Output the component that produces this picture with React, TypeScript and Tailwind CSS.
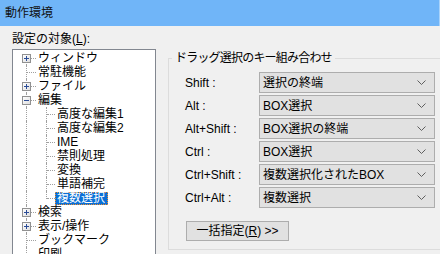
import React from "react";

type Item = { label: string; level: 0 | 1; box?: "+" | "-"; selected?: boolean; last?: boolean };

const items: Item[] = [
  { label: "ウィンドウ", level: 0, box: "+" },
  { label: "常駐機能", level: 0 },
  { label: "ファイル", level: 0, box: "+" },
  { label: "編集", level: 0, box: "-" },
  { label: "高度な編集1", level: 1 },
  { label: "高度な編集2", level: 1 },
  { label: "IME", level: 1 },
  { label: "禁則処理", level: 1 },
  { label: "変換", level: 1 },
  { label: "単語補完", level: 1 },
  { label: "複数選択", level: 1, selected: true, last: true },
  { label: "検索", level: 0, box: "+" },
  { label: "表示/操作", level: 0, box: "+" },
  { label: "ブックマーク", level: 0 },
  { label: "印刷", level: 0 },
];

const rows: [string, string][] = [
  ["Shift :", "選択の終端"],
  ["Alt :", "BOX選択"],
  ["Alt+Shift :", "BOX選択の終端"],
  ["Ctrl :", "BOX選択"],
  ["Ctrl+Shift :", "複数選択化されたBOX"],
  ["Ctrl+Alt :", "複数選択"],
];

function ExpandBox({ kind }: { kind: "+" | "-" }) {
  return (
    <div className="absolute left-[9px] top-[3px] w-[9px] h-[9px] border border-[#919191] bg-gradient-to-br from-white to-[#dedede] flex items-center justify-center">
      <svg width="7" height="7" viewBox="0 0 7 7" className="block">
        <rect x="1" y="3" width="5" height="1" fill="#2b4c96" />
        {kind === "+" && <rect x="3" y="1" width="1" height="5" fill="#2b4c96" />}
      </svg>
    </div>
  );
}

function TreeRow({ item, first }: { item: Item; first: boolean }) {
  return (
    <div className="flex h-[14px] items-center">
      <div className="relative w-[23px] h-[14px] shrink-0">
        <div
          className={`absolute left-[13px] w-0 border-l border-dotted border-[#a0a0a0] ${first ? "top-[7px] bottom-0" : "top-0 bottom-0"}`}
        />
        {item.level === 0 && (
          <div className="absolute left-[14px] w-[9px] top-[7px] h-0 border-t border-dotted border-[#a0a0a0]" />
        )}
        {item.box && <ExpandBox kind={item.box} />}
      </div>
      {item.level === 1 && (
        <div className="relative w-[19px] h-[14px] shrink-0">
          <div
            className={`absolute left-[10px] w-0 border-l border-dotted border-[#a0a0a0] ${item.last ? "top-0 h-[8px]" : "top-0 bottom-0"}`}
          />
          <div className="absolute left-[11px] w-[8px] top-[7px] h-0 border-t border-dotted border-[#a0a0a0]" />
        </div>
      )}
      <div
        className={`h-[13px] leading-[11px] pl-[1px] pr-[2px] border whitespace-nowrap ${
          item.selected
            ? "bg-[#0a6fd6] text-white border-dotted border-[#f09030]"
            : "border-transparent text-black"
        }`}
      >
        {item.label}
      </div>
    </div>
  );
}

function Chevron() {
  return (
    <svg width="9" height="5" viewBox="0 0 9 5" className="block">
      <polyline points="0.5,0.5 4.5,4.5 8.5,0.5" fill="none" stroke="#5f5f5f" strokeWidth="1" />
    </svg>
  );
}

export default function App() {
  return (
    <div
      className="w-[440px] h-[254px] overflow-hidden bg-[#f0f0f0] flex flex-col text-[12px] text-black"
      style={{ fontFamily: '"Liberation Sans", "Noto Sans CJK JP", sans-serif' }}
    >
      <div className="h-[26px] shrink-0 bg-[#70b5f8] border-r border-[#a9d3fb] pl-[5px] flex items-center text-[#111] leading-[14px]">
        動作環境
      </div>
      <div className="flex flex-1 min-h-0">
        <div className="w-[168px] shrink-0 pl-[12px] pt-[6px] flex flex-col">
          <div className="h-[14px] leading-[14px] whitespace-nowrap">
            設定の対象(<span className="underline">L</span>):
          </div>
          <div className="mt-[3px] w-[144px] h-[230px] shrink-0 border border-[#828790] bg-white pt-[1px] overflow-hidden">
            {items.map((it, i) => (
              <TreeRow key={i} item={it} first={i === 0} />
            ))}
          </div>
        </div>
        <div className="flex-1 min-w-0">
          <fieldset className="mt-[25px] w-[300px] h-[199px] border border-[#dcdcdc] pl-[16px] pt-[7px]">
            <legend className="-ml-[13px] px-[3px] h-[14px] leading-[14px] tracking-[-0.8px] whitespace-nowrap">
              ドラッグ選択のキー組み合わせ
            </legend>
            <div className="flex flex-col gap-[2px]">
              {rows.map(([k, v]) => (
                <div key={k} className="flex items-center h-[21px]">
                  <div className="w-[74px] shrink-0 whitespace-nowrap leading-[14px]">{k}</div>
                  <div className="w-[176px] h-[21px] shrink-0 border border-[#adadad] bg-[#e1e1e1] flex items-center pl-[3px] pr-[8px]">
                    <div className="flex-1 whitespace-nowrap leading-[14px]">{v}</div>
                    <Chevron />
                  </div>
                </div>
              ))}
            </div>
            <button className="mt-[13px] ml-[1px] w-[103px] h-[20px] border border-[#adadad] bg-[#e1e1e1] flex items-center justify-center leading-[14px] whitespace-nowrap">
              一括指定(<span className="underline">R</span>) &gt;&gt;
            </button>
          </fieldset>
        </div>
      </div>
    </div>
  );
}
